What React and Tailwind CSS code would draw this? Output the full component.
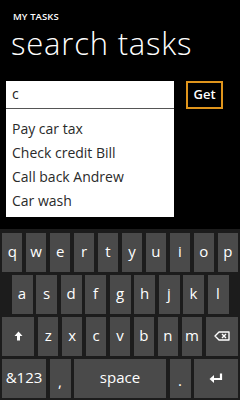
import React from "react";

const font = { fontFamily: '"Open Sans", "Noto Sans", sans-serif' };

function Key({ children, className = "" }) {
  return (
    <div
      className={
        "h-[39px] bg-[#4a4a4a] text-white flex items-center justify-center text-[15px] leading-none pb-[2px] " +
        className
      }
    >
      {children}
    </div>
  );
}

export default function App() {
  const row1 = ["q", "w", "e", "r", "t", "y", "u", "i", "o", "p"];
  const row2 = ["a", "s", "d", "f", "g", "h", "j", "k", "l"];
  const row3 = ["z", "x", "c", "v", "b", "n", "m"];
  return (
    <div
      className="w-[240px] h-[400px] bg-black flex flex-col overflow-hidden"
      style={font}
    >
      <div className="pl-[13px] pt-[12px] text-white text-[9.5px] font-semibold leading-[9px] tracking-[0.1px]">
        MY TASKS
      </div>
      <div className="pl-[11px] mt-[7px] text-white text-[31px] font-light leading-[30px] tracking-[0.8px]">
        search tasks
      </div>
      <div className="flex mt-[23px] pl-[6px]">
        <div className="w-[168px] bg-white flex flex-col">
          <div className="h-[28px] flex items-center pl-[6px] text-[14px] text-[#222] border-b border-[#555] pb-[3px]">
            c
          </div>
          <div className="flex flex-col pt-[7px] pb-[5px] text-[#2a2a2a] text-[14px]">
            {["Pay car tax", "Check credit Bill", "Call back Andrew", "Car wash"].map(
              (t) => (
                <div key={t} className="h-[24px] flex items-center pl-[6px]">
                  {t}
                </div>
              )
            )}
          </div>
        </div>
        <div className="ml-[12px] w-[37px] h-[28px] border-2 border-[#e0951c] flex items-center justify-center text-white text-[13px] font-semibold">
          Get
        </div>
      </div>
      <div className="flex-1" />
      <div className="h-[171px] bg-[#1c1c1c] flex flex-col gap-[3px] pt-[4px] px-[2px]">
        <div className="flex gap-[3.5px]">
          {row1.map((k) => (
            <Key key={k} className="w-[20.5px]">
              {k}
            </Key>
          ))}
        </div>
        <div className="flex gap-[3.5px] justify-center">
          {row2.map((k) => (
            <Key key={k} className="w-[21px]">
              {k}
            </Key>
          ))}
        </div>
        <div className="flex gap-[3.5px]">
          <Key className="w-[32.5px]">
            <svg width="9" height="10" viewBox="0 0 9 10">
              <path d="M4.5 0.5 L8.5 5 L6 5 L6 9.5 L3 9.5 L3 5 L0.5 5 Z" fill="white" />
            </svg>
          </Key>
          {row3.map((k) => (
            <Key key={k} className="w-[20.5px]">
              {k}
            </Key>
          ))}
          <Key className="w-[32.5px]">
            <svg width="16" height="10" viewBox="0 0 16 10">
              <path
                d="M5 1 H15 V9 H5 L1 5 Z"
                fill="none"
                stroke="white"
                strokeWidth="1.4"
                strokeLinejoin="round"
              />
              <path d="M8 3 L12 7 M12 3 L8 7" stroke="white" strokeWidth="1.4" />
            </svg>
          </Key>
        </div>
        <div className="flex gap-[3.5px]">
          <Key className="w-[44px] text-[13px]">&amp;123</Key>
          <Key className="w-[21px] items-end pb-[9px]">,</Key>
          <Key className="w-[92px] text-[13px]">space</Key>
          <Key className="w-[21px] items-end pb-[10px]">.</Key>
          <Key className="w-[44px]">
            <svg width="14" height="10" viewBox="0 0 14 10">
              <path
                d="M12 0.5 V6 H3"
                fill="none"
                stroke="white"
                strokeWidth="2.2"
              />
              <path d="M0.5 6 L5 2 L5 10 Z" fill="white" />
            </svg>
          </Key>
        </div>
      </div>
    </div>
  );
}
